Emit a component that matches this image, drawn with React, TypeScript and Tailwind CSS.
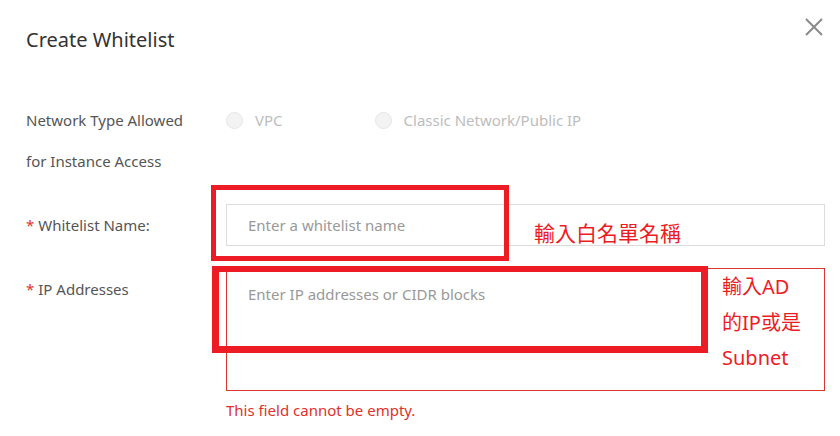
const labelFont = { fontFamily: '"Noto Sans", "Noto Sans CJK TC", sans-serif' };

function Radio({ label }: { label: string }) {
	return (
		<label className="flex items-center h-[41px] gap-[12px]">
			<span className="w-[17px] h-[17px] rounded-full bg-[#f3f3f3] border border-[#e6e6e6]" />
			<span className="text-[15px] text-[#bdbdbd]">{label}</span>
		</label>
	);
}

export default function App() {
	return (
		<div
			className="relative w-[840px] h-[436px] bg-white overflow-hidden text-[#555]"
			style={labelFont}
		>
			{/* header */}
			<div className="flex items-start justify-between pl-[26px] pr-[17px] pt-[18px]">
				<h2 className="text-[20px] leading-[28px] text-[#333] mt-[8px]">Create Whitelist</h2>
				<button className="text-[#8a8a8a]">
					<svg width="18" height="18" viewBox="0 0 18 18" fill="none" stroke="currentColor" strokeWidth="2">
						<path d="M1 1L17 17M17 1L1 17" />
					</svg>
				</button>
			</div>

			{/* form */}
			<div className="flex flex-col pl-[26px] pr-[15px] mt-[46px]">
				<div className="flex">
					<div className="w-[200px] text-[15px] leading-[41px]">
						Network Type Allowed
						<br />
						for Instance Access
					</div>
					<div className="flex gap-[92px]">
						<Radio label="VPC" />
						<Radio label="Classic Network/Public IP" />
					</div>
				</div>

				<div className="flex mt-[22px]">
					<div className="w-[200px] text-[15px] leading-[42px]">
						<span className="text-[#e5322d] mr-[4px]">*</span>
						Whitelist Name:
					</div>
					<input
						className="flex-1 h-[42px] border border-[#dcdcdc] px-[21px] text-[15px] outline-none placeholder:text-[#999]"
						placeholder="Enter a whitelist name"
					/>
				</div>

				<div className="flex mt-[22px]">
					<div className="w-[200px] text-[15px] leading-[43px]">
						<span className="text-[#e5322d] mr-[4px]">*</span>
						IP Addresses
					</div>
					<div className="flex-1 flex flex-col">
						<textarea
							className="h-[123px] border border-[#d9362f] px-[21px] pt-[14px] text-[15px] leading-[22px] resize-none outline-none placeholder:text-[#999]"
							placeholder="Enter IP addresses or CIDR blocks"
						/>
						<p className="mt-[8px] text-[15px] leading-[22px] text-[#e0312b]">
							This field cannot be empty.
						</p>
					</div>
				</div>
			</div>

			{/* annotations drawn over the screenshot */}
			<div className="absolute left-[211px] top-[185px] w-[298px] h-[76px] border-[5px] border-[#ed1c24]" />
			<div className="absolute left-[212px] top-[266px] w-[496px] h-[87px] border-[7px] border-t-[6px] border-[#ed1c24]" />
			<div
				className="absolute left-[534px] top-[218px] text-[21px] leading-[28px] text-[#ed1c24]"
				style={{ fontFamily: '"Noto Sans CJK TC", sans-serif' }}
			>
				輸入白名單名稱
			</div>
			<div
				className="absolute left-[722px] top-[269px] text-[20px] leading-[35.5px] text-[#ed1c24]"
				style={{ fontFamily: '"Noto Sans", "Noto Sans CJK TC", sans-serif' }}
			>
				輸入AD
				<br />
				的IP或是
				<br />
				Subnet
			</div>
		</div>
	);
}
